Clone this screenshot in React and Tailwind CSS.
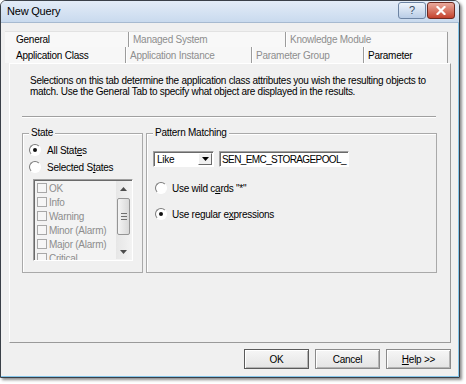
import React from 'react';

const rowTop = [
  { label: 'General', w: 'w-[123px]', on: true, first: true },
  { label: 'Managed System', w: 'w-[157px]' },
  { label: 'Knowledge Module', w: 'w-[163px]', last: true },
];

const rowFront = [
  { label: 'Application Class', w: 'w-[120px]', on: true, first: true },
  { label: 'Application Instance', w: 'w-[126px]' },
  { label: 'Parameter Group', w: 'w-[112px]' },
  { label: 'Parameter', w: 'w-[85px]', on: true, last: true },
];

const states = ['OK', 'Info', 'Warning', 'Minor (Alarm)', 'Major (Alarm)', 'Critical'];

function Tab({ label, w, on, first, last }) {
  return (
    <div
      className={`${w} h-full flex items-center whitespace-nowrap ${
        first ? 'pl-[11px]' : 'pl-[4px] border-l border-[#9c9c9c] shadow-[inset_1px_0_0_#ffffff]'
      } ${last ? 'border-r border-[#9c9c9c]' : ''} ${on ? 'text-black' : 'text-[#8e8e8e]'}`}
    >
      {label}
    </div>
  );
}

function Radio({ checked }) {
  return (
    <span className="w-[12px] h-[12px] rounded-full border-[1.5px] border-t-[#7b7b7b] border-l-[#7b7b7b] border-r-white border-b-white bg-white flex items-center justify-center shrink-0">
      {checked && <span className="w-[4px] h-[4px] rounded-full bg-[#111]" />}
    </span>
  );
}

function GroupBox({ label, className, children }) {
  return (
    <div className={`border border-[#a9a9a9] shadow-[inset_1px_1px_0_#ffffff] flex flex-col ${className}`}>
      <span className="-mt-[7px] ml-[6px] px-[2px] w-fit bg-[#f0f0f0] leading-[12px]">{label}</span>
      {children}
    </div>
  );
}

function ScrollBar() {
  return (
    <div className="w-[15px] h-full bg-gradient-to-r from-[#e6e6e6] to-[#f2f2f2] flex flex-col items-center">
      <div className="h-[15px] w-full flex items-center justify-center">
        <svg width="7" height="4" viewBox="0 0 7 4"><path d="M0 4 L3.5 0 L7 4 Z" fill="#4d4d4d" /></svg>
      </div>
      <div className="mt-[2px] w-[13px] h-[37px] rounded-[2px] border border-[#959595] bg-gradient-to-r from-[#f4f4f4] to-[#d9d9d9] flex flex-col items-center justify-center gap-[2px]">
        <span className="w-[6px] h-px bg-[#6f6f6f]" />
        <span className="w-[6px] h-px bg-[#6f6f6f]" />
        <span className="w-[6px] h-px bg-[#6f6f6f]" />
      </div>
      <div className="mt-auto h-[15px] w-full flex items-center justify-center">
        <svg width="7" height="4" viewBox="0 0 7 4"><path d="M0 0 L3.5 4 L7 0 Z" fill="#4d4d4d" /></svg>
      </div>
    </div>
  );
}

function DlgButton({ children, primary }) {
  return (
    <button
      className={`w-[65px] h-[20px] bg-gradient-to-b from-[#f6f6f6] to-[#e4e4e4] border ${
        primary ? 'border-[#5a5a5a]' : 'border-[#8a8a8a]'
      } shadow-[inset_1px_1px_0_#ffffff,inset_-1px_-1px_0_#b4b4b4] text-black flex items-center justify-center`}
    >
      {children}
    </button>
  );
}

export default function App() {
  return (
    <div className="w-[466px] h-[384px] bg-white font-['Liberation_Sans',Arial,sans-serif] text-[10px] tracking-[-0.25px] text-black">
      <div className="w-[460px] h-[378px] border border-[#3a4048] rounded-t-[6px] shadow-[2px_2px_3px_rgba(0,0,0,0.45)] flex flex-col overflow-hidden">
        {/* title bar */}
        <div className="h-[21px] shrink-0 bg-gradient-to-b from-[#e3ecf7] to-[#c9daee] flex items-start">
          <span className="ml-[6px] mt-[4px] text-[11px] leading-[13px] tracking-[-0.2px]">New Query</span>
          <div className="ml-auto mr-[4px] mt-[1px] flex gap-px">
            <div className="w-[28px] h-[17px] rounded-[3px] border border-[#6d84a3] bg-gradient-to-b from-[#eef4fb] to-[#b9cde6] flex items-center justify-center text-[11px] text-[#3a4a60] leading-none">?</div>
            <div className="w-[28px] h-[17px] rounded-[3px] border border-[#6e2a20] bg-gradient-to-b from-[#e9a99c] to-[#c3402c] flex items-center justify-center">
              <svg width="10" height="9" viewBox="0 0 10 9">
                <path d="M1.5 1 L8.5 8 M8.5 1 L1.5 8" stroke="#ffffff" strokeWidth="2.2" strokeLinecap="square" />
              </svg>
            </div>
          </div>
        </div>

        {/* body */}
        <div className="flex-1 bg-[#f0f0f0] border-t border-[#a7bad0] border-r border-b border-r-[#86c6ea] border-b-[#86c6ea] flex flex-col">
          {/* tabs */}
          <div className="mt-[8px] ml-[4px] w-[443px] flex flex-col">
            <div className="h-[16px] flex bg-[#f8f8f8] border-t border-[#e2e2e2]">
              {rowTop.map((t) => (
                <Tab key={t.label} {...t} />
              ))}
            </div>
            <div className="h-[16px] flex bg-[#f7f7f7]">
              {rowFront.map((t) => (
                <Tab key={t.label} {...t} />
              ))}
            </div>
          </div>

          {/* panel */}
          <div className="ml-[8px] w-[442px] h-[280px] border border-t-white border-l-white border-r-[#9a9a9a] border-b-[#9a9a9a] flex flex-col">
            <p className="mt-[11px] pl-[20px] leading-[11px] tracking-[-0.28px]">
              Selections on this tab determine the application class attributes you wish the resulting objects to
              <br />
              match. Use the General Tab to specify what object are displayed in the results.
            </p>
            <div className="mt-[19px] ml-[12px] w-[414px] h-[2px] border-t border-[#a0a0a0] border-b border-b-white" />

            <div className="mt-[15px] ml-[12px] flex gap-[3px]">
              <GroupBox label="State" className="w-[121px] h-[140px]">
                <div className="mt-[4px] ml-[6px] h-[14px] flex items-center gap-[6px]">
                  <Radio checked />
                  <span>
                    All Stat<u>e</u>s
                  </span>
                </div>
                <div className="mt-[3px] ml-[6px] h-[14px] flex items-center gap-[6px]">
                  <Radio />
                  <span>
                    Selected S<u>t</u>ates
                  </span>
                </div>
                <div className="mt-[5px] ml-[10px] w-[100px] h-[82px] border border-t-[#a0a0a0] border-l-[#a0a0a0] border-r-white border-b-white shadow-[inset_1px_1px_0_#6a6a6a] bg-[#f3f3f3] flex overflow-hidden">
                  <div className="flex-1 pt-[1px] pl-[3px] flex flex-col text-[#8d8d8d]">
                    {states.map((s) => (
                      <div key={s} className="h-[14px] shrink-0 flex items-center gap-[2px] whitespace-nowrap">
                        <span className="w-[10px] h-[10px] border border-[#a8a8a8] bg-[#f6f6f6] shrink-0" />
                        {s}
                      </div>
                    ))}
                  </div>
                  <div className="pt-px pb-px pr-px">
                    <ScrollBar />
                  </div>
                </div>
              </GroupBox>

              <GroupBox label="Pattern Matching" className="w-[291px] h-[140px]">
                <div className="mt-[12px] ml-[6px] flex gap-[5px]">
                  <div className="w-[61px] h-[16px] border border-t-[#a0a0a0] border-l-[#a0a0a0] border-r-white border-b-white shadow-[inset_1px_1px_0_#6a6a6a] bg-white flex items-center">
                    <span className="pl-[3px]">Like</span>
                    <div className="ml-auto mr-px w-[14px] h-[12px] bg-[#f0f0f0] border border-t-white border-l-white border-r-[#6a6a6a] border-b-[#6a6a6a] flex items-center justify-center">
                      <svg width="7" height="4" viewBox="0 0 7 4"><path d="M0 0 L3.5 4 L7 0 Z" fill="#000" /></svg>
                    </div>
                  </div>
                  <div className="w-[130px] h-[16px] border border-t-[#a0a0a0] border-l-[#a0a0a0] border-r-white border-b-white shadow-[inset_1px_1px_0_#6a6a6a] bg-white flex items-center pl-[2px] overflow-hidden whitespace-nowrap tracking-[-0.6px]">
                    SEN_EMC_STORAGEPOOL_
                  </div>
                </div>
                <div className="mt-[14px] ml-[8px] h-[14px] flex items-center gap-[5px]">
                  <Radio />
                  <span>
                    Use wild c<u>a</u>rds "*"
                  </span>
                </div>
                <div className="mt-[12px] ml-[8px] h-[14px] flex items-center gap-[5px]">
                  <Radio checked />
                  <span>
                    Use regular e<u>x</u>pressions
                  </span>
                </div>
              </GroupBox>
            </div>
          </div>

          {/* dialog buttons */}
          <div className="mt-[6px] pr-[7px] flex justify-end gap-[6px]">
            <DlgButton primary>OK</DlgButton>
            <DlgButton>Cancel</DlgButton>
            <DlgButton>
              <span>
                <u>H</u>elp &gt;&gt;
              </span>
            </DlgButton>
          </div>
        </div>
      </div>
    </div>
  );
}
